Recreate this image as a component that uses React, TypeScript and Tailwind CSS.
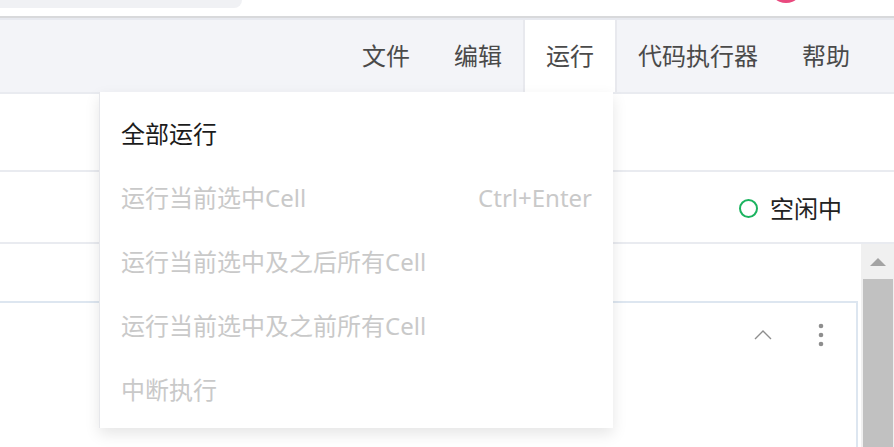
import React from 'react';

const MENU = ['文件', '编辑', '运行', '代码执行器', '帮助'];

const RUN_ITEMS = [
  { label: '全部运行', enabled: true },
  { label: '运行当前选中Cell', enabled: false, shortcut: 'Ctrl+Enter' },
  { label: '运行当前选中及之后所有Cell', enabled: false },
  { label: '运行当前选中及之前所有Cell', enabled: false },
  { label: '中断执行', enabled: false },
];

const RunMenu: React.FC = () => (
  <div className="absolute top-full right-[2px] w-[514px] bg-white border-l border-[#e6e7eb] pt-[10px] pb-[6px] shadow-[0_6px_14px_rgba(0,0,0,0.10)] z-20">
    {RUN_ITEMS.map((item) => (
      <div
        key={item.label}
        className={`h-16 flex items-center justify-between px-[21px] text-[24px] ${
          item.enabled ? 'text-[#1c1c1c]' : 'text-[#c9c9c9]'
        }`}
      >
        <span>{item.label}</span>
        {item.shortcut && <span>{item.shortcut}</span>}
      </div>
    ))}
  </div>
);

export default function App() {
  return (
    <div
      className="relative w-[894px] h-[447px] overflow-hidden bg-white flex flex-col"
      style={{ fontFamily: '"Noto Sans", "Noto Sans CJK SC", sans-serif' }}
    >
      {/* top strip */}
      <div className="relative h-4 shrink-0">
        <div className="w-[242px] h-2 bg-[#f0f1f4] rounded-br-[16px]" />
        <div className="absolute left-[769px] top-[-31px] w-[34px] h-[34px] rounded-full bg-[#e9497e]" />
      </div>
      <div className="h-[2px] shrink-0 bg-[#d8d9db]" />
      <div className="h-[2px] shrink-0 bg-[#e7e9ef]" />

      {/* menu bar */}
      <nav className="h-[72px] shrink-0 bg-[#f3f4f8] flex justify-end pr-[22px] text-[24px] text-[#4a4a4a]">
        {MENU.map((m) =>
          m === '运行' ? (
            <div key={m} className="relative flex items-center px-[21px] bg-white border-x-2 border-[#e8e9ee] -mx-px">
              {m}
              <RunMenu />
            </div>
          ) : (
            <div key={m} className="flex items-center px-[22px]">
              {m}
            </div>
          )
        )}
      </nav>

      {/* toolbar row */}
      <div className="h-20 shrink-0 border-t-2 border-b-2 border-[#e9ebf0]" />

      {/* status row */}
      <div className="h-[72px] shrink-0 border-b-2 border-[#e9ebf0] flex items-center justify-end pr-[52px] pt-[3px]">
        <div className="w-[19px] h-[19px] rounded-full border-2 border-[#1bb35f] mr-[12px]" />
        <span className="text-[24px] text-[#222]">空闲中</span>
      </div>

      {/* notebook area */}
      <div className="flex-1 flex min-h-0">
        <div className="flex-1 pt-[57px] pr-[3px]">
          <div className="h-full border-t-2 border-r-2 border-[#dde6f0] flex justify-end items-start pt-[20px] pr-[32px] gap-[46px]">
            <svg width="18" height="12" viewBox="0 0 18 12" className="mt-[5px]">
              <path d="M1 11 L9 3 L17 11" fill="none" stroke="#8e8e8e" strokeWidth="1.4" />
            </svg>
            <svg width="6" height="24" viewBox="0 0 6 24">
              <circle cx="3" cy="3" r="2.3" fill="#8e8e8e" />
              <circle cx="3" cy="12" r="2.3" fill="#8e8e8e" />
              <circle cx="3" cy="21" r="2.3" fill="#8e8e8e" />
            </svg>
          </div>
        </div>
        <div className="w-[33px] bg-[#f0f0f0] flex flex-col items-center">
          <div className="h-[35px] w-full flex items-center justify-center">
            <svg width="18" height="10" viewBox="0 0 18 10">
              <path d="M9 1 L17 9 L1 9 Z" fill="#a3a3a3" />
            </svg>
          </div>
          <div className="flex-1 w-[30px] bg-[#c1c1c1]" />
        </div>
      </div>
    </div>
  );
}
